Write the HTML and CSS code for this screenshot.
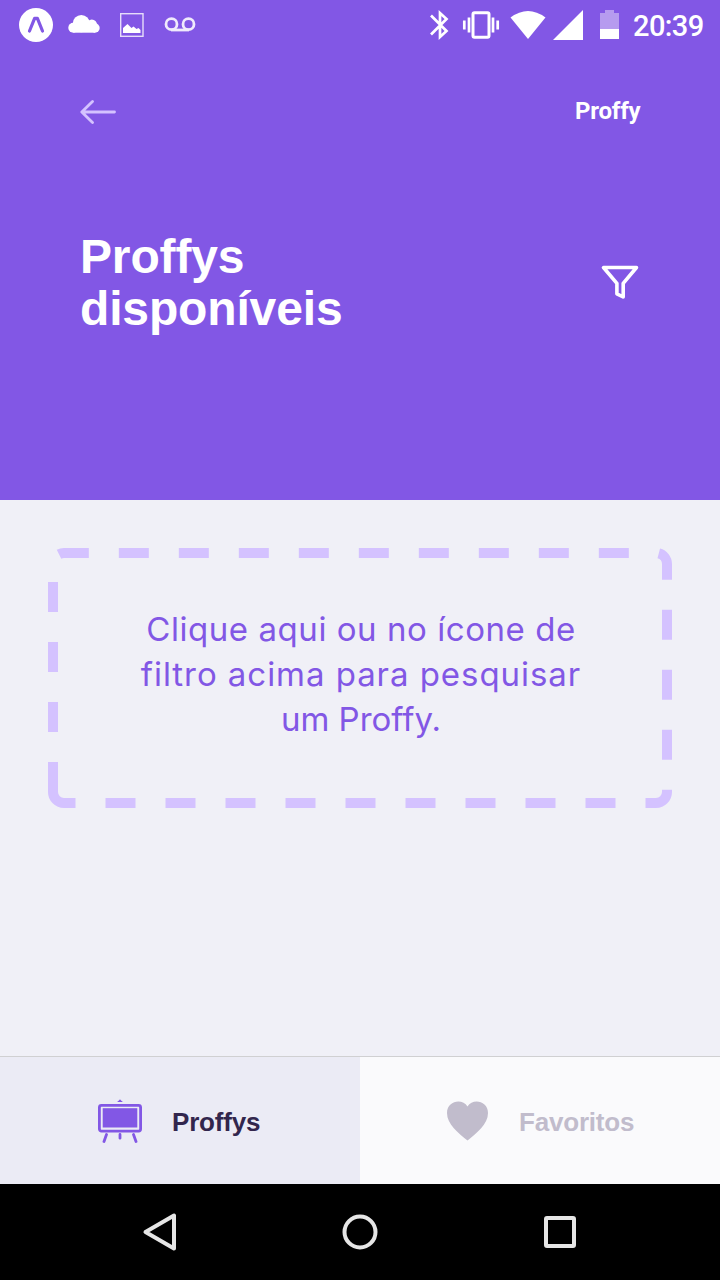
FILE: index.html
```html
<!DOCTYPE html>
<html lang="pt-BR">
<head>
<meta charset="utf-8">
<title>Proffy</title>
<link rel="stylesheet" href="styles.css">
</head>
<body>
<div class="screen">
  <header class="header">
    <div class="status">
      <svg class="status-left" width="200" height="50" viewBox="0 0 200 50">
        <circle cx="36" cy="25" r="17" fill="#fff"/>
        <path d="M29.500 31 34.600 18.300h2.800L42.500 31" fill="none" stroke="#8257e5" stroke-width="3.200" stroke-linecap="round" stroke-linejoin="round"/>
        <g fill="#fff"><circle cx="73.300" cy="27.700" r="5"/><circle cx="81.300" cy="23.600" r="8.600"/><circle cx="91.800" cy="24.700" r="5.200"/><circle cx="95" cy="28" r="4.700"/><path d="M73.300 25H95v7.700H73.300z"/></g>
        <rect x="120.700" y="13.700" width="22.300" height="22.600" fill="none" stroke="#e6ddfa" stroke-width="1.400"/>
        <path d="M123 33v-5l4.500-4 4 4 2-1.500 3 2.500 2-1 2 2v3z" fill="#fff"/>
        <g fill="none" stroke="#f0eafc" stroke-width="2.800"><circle cx="171.500" cy="24.200" r="5.500"/><circle cx="188.500" cy="24.200" r="5.500"/><path d="M171 30h18"/></g>
      </svg>
      <svg class="status-right" width="205" height="50" viewBox="420 0 205 50">
        <path d="M431 15.500 446.500 31 440 37V13l6.500 6L431 34.500" fill="none" stroke="#fff" stroke-width="2.700"/>
        <rect x="473" y="12.700" width="16" height="24.600" rx="1.500" fill="none" stroke="#fff" stroke-width="3"/>
        <path d="M464.300 20.500v9M469 17.500v15M493 17.500v15M497.700 20.500v9" stroke="#fff" stroke-width="2.700"/>
        <path d="M510.500 17.500Q528 4.500 545.500 17.500L528 39z" fill="#fff"/>
        <path d="M553 40 583 10v30z" fill="#fff"/>
        <path d="M600 13h5v-3h9v3h5v16h-19z" fill="#b69bef"/><path d="M600 29h19v10h-19z" fill="#fff"/>
      </svg>
      <span class="clock">20:39</span>
    </div>
    <div class="topbar">
      <svg width="36" height="26" viewBox="0 0 36 26"><path d="M34.500 13H2M12.500 2.500 1.800 13l10.700 10.500" fill="none" stroke="#d4c2ff" stroke-width="2.800" stroke-linecap="round" stroke-linejoin="round"/></svg>
      <span class="brand">Proffy</span>
    </div>
    <div class="heading">
      <h1 class="title"><span class="title-a">Proffys</span><span class="title-b">disponíveis</span></h1>
      <svg width="40" height="36" viewBox="0 0 40 36"><path d="M3.500 2.500h33L23.200 18.300V32l-6.300-3.200V18.300z" fill="none" stroke="#fff" stroke-width="3.600" stroke-linecap="round" stroke-linejoin="round"/></svg>
    </div>
  </header>
  <main class="content">
    <div class="prompt">
      <svg class="outline" width="624" height="260" viewBox="0 0 624 260"><path d="M5 244V16A11 11 0 0 1 16 5H608A11 11 0 0 1 619 16V244A11 11 0 0 1 608 255H16A11 11 0 0 1 5 244" fill="none" stroke="#d4c2ff" stroke-width="10" stroke-dasharray="30 30"/></svg>
      <span class="line-a">Clique aqui ou no ícone de</span>
      <span class="line-b">filtro acima para pesquisar</span>
      <span class="line-c">um Proffy.</span>
    </div>
  </main>
  <nav class="tabs">
    <div class="tab tab-active">
      <svg width="44" height="44" viewBox="0 0 44 44"><path d="M19.500 3q0-1.300 1.300-1.300Q22-.5 23.200 1.700 24.500 1.700 24.500 3z" fill="#8257e5"/><rect x="1.400" y="6.400" width="41.200" height="25.700" rx="2" fill="none" stroke="#8257e5" stroke-width="2.800"/><rect x="4.700" y="9.200" width="34.600" height="19.300" fill="#8257e5"/><path d="M8.500 35.500 6 42.500M22 35.500v3.700M35.500 35.500l2.500 7" stroke="#8257e5" stroke-width="2.800" stroke-linecap="round"/></svg>
      <span class="tab-a">Proffys</span>
    </div>
    <div class="tab">
      <svg width="42" height="40" viewBox="0 0 42 40"><path d="M20.500 39.500C11.500 32 0 23.500 0 12 0-.5 15.500-3 20.500 5.500 25.500-3 41 -.5 41 12c0 11.500-11.500 20-20.500 27.500z" fill="#c1bccc"/></svg>
      <span class="tab-b">Favoritos</span>
    </div>
  </nav>
  <footer class="system">
    <svg width="480" height="80" viewBox="0 0 480 80" fill="none" stroke="#e6e6e6" stroke-width="4" stroke-linejoin="round"><path d="M54 25.500v33L25.500 42z"/><circle cx="240" cy="42" r="15.500"/><rect x="426" y="28" width="28" height="28" rx="1"/></svg>
  </footer>
</div>
</body>
</html>
```

FILE: styles.css
```css
* { box-sizing: border-box; }
body { margin: 0; }
svg { display: block; flex: none; }
.screen { display: flex; flex-direction: column; width: 720px; height: 1280px; overflow: hidden; background: #f0f0f7; }
.header { height: 500px; background: #8257e5; color: #fff; }
.status { display: flex; height: 50px; }
.status-right { margin-left: 220px; }
.clock { margin-left: 8px; font: 500 29px/53px Roboto, sans-serif; letter-spacing: -0.6px; white-space: nowrap; }
.topbar { display: flex; justify-content: space-between; align-items: center; height: 124px; padding: 0 80px; }
.brand { width: 65px; padding-bottom: 3px; font: 700 24px/28px Roboto, sans-serif; letter-spacing: -0.2px; }
.heading { display: flex; justify-content: space-between; align-items: center; height: 104px; margin-top: 57px; padding: 0 80px; }
.title { margin: 0; font: 700 48px/52px "Liberation Sans", Arial, sans-serif; letter-spacing: -0.15px; white-space: nowrap; }
.title-a, .title-b { display: block; }
.content { flex: 1; padding: 48px; }
.prompt { position: relative; display: flex; flex-direction: column; align-items: center; height: 260px; padding: 59px 0 0 2px; color: #8257e5; font: 400 33px/45px Inter, sans-serif; white-space: nowrap; }
.line-a { letter-spacing: 0.55px; }
.line-b { letter-spacing: 0.95px; }
.outline { position: absolute; top: 0; left: 0; }
.tabs { display: flex; height: 128px; border-top: 1px solid #d0d0d2; background: #fafafc; }
.tab { display: flex; align-items: center; width: 360px; padding-left: 87px; gap: 30px; color: #c1bccc; font: 700 26px/30px "Liberation Sans", Arial, sans-serif; letter-spacing: -0.2px; }
.tab-active { padding-left: 98px; gap: 30px; background: #ebebf5; color: #32264d; }
.tab span { padding-top: 2px; }
.system { display: flex; justify-content: center; height: 96px; padding-top: 6px; background: #000; }
```
